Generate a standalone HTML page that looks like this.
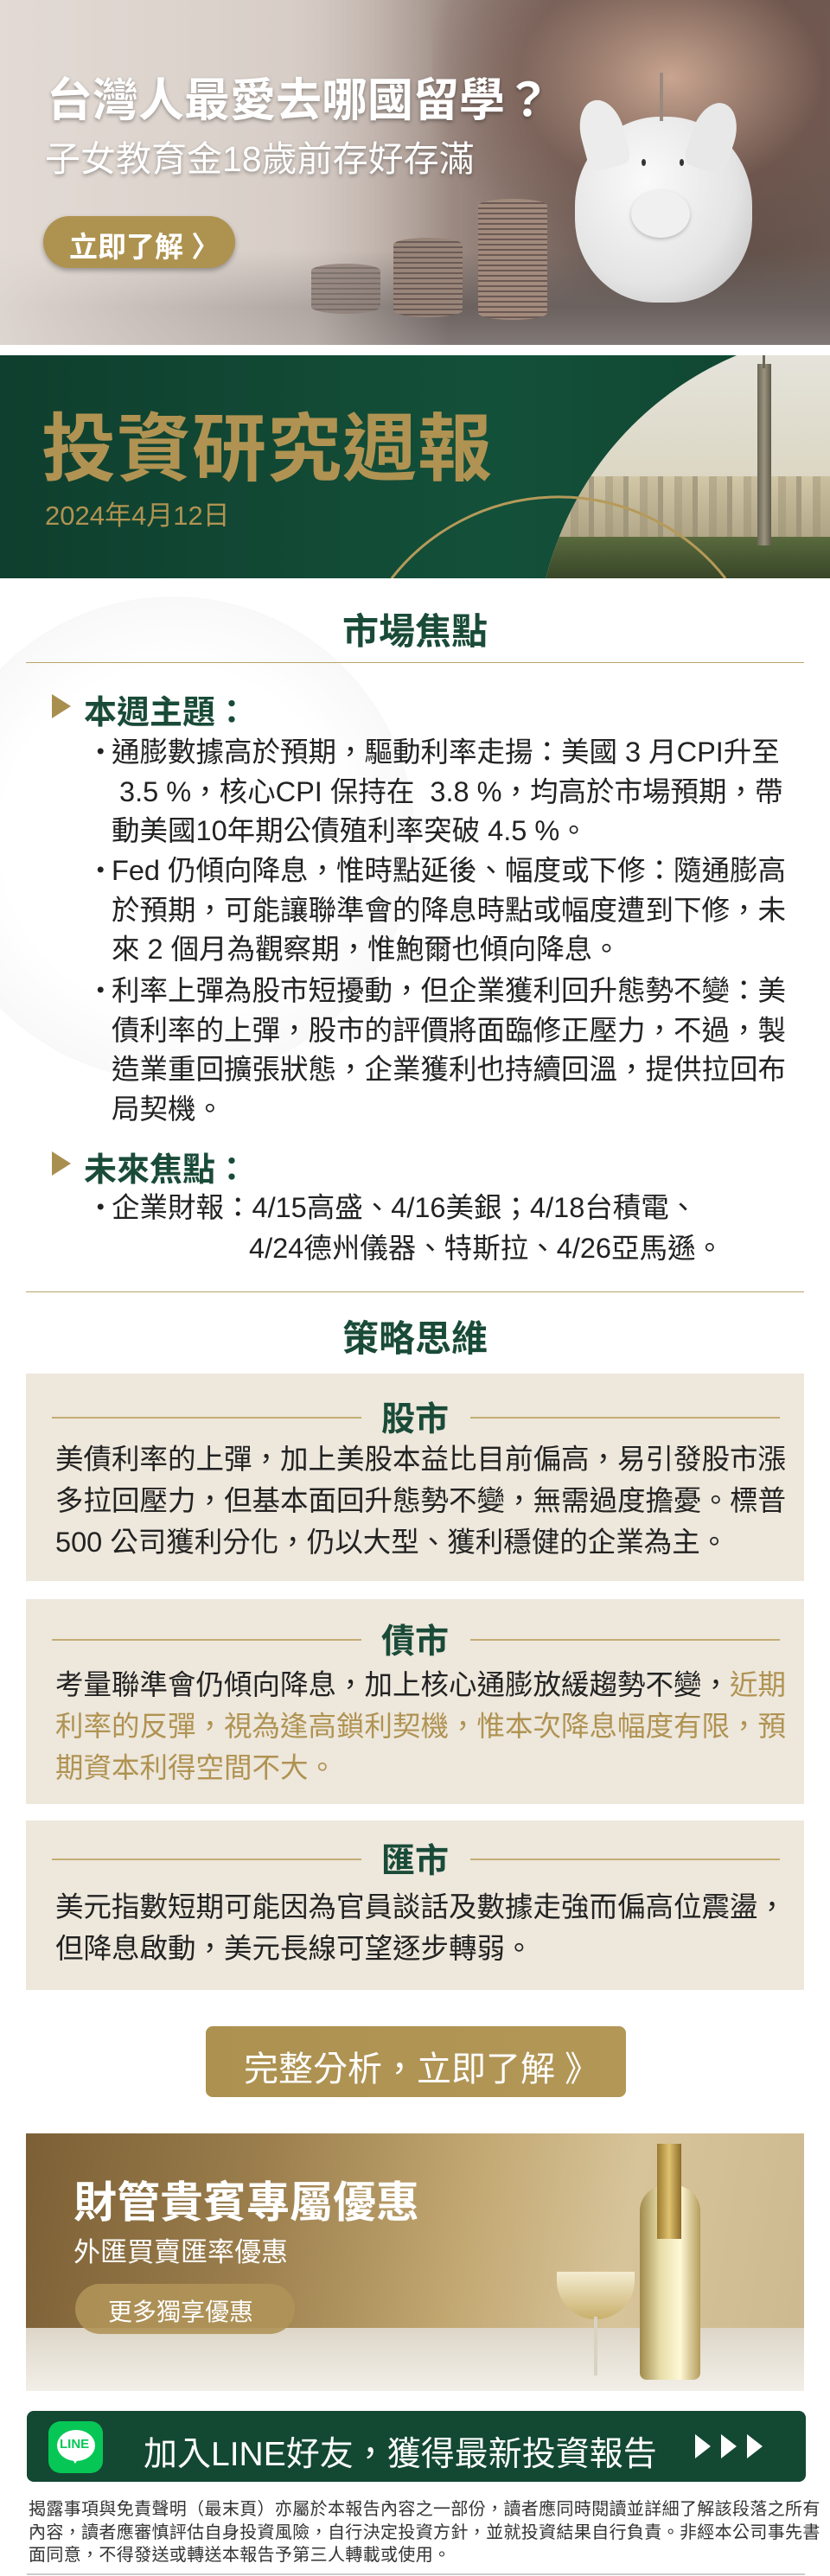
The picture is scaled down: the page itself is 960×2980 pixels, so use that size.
<!DOCTYPE html>
<html><head><meta charset="utf-8">
<style>
*{margin:0;padding:0;box-sizing:border-box}
body{width:960px;height:2980px;position:relative;background:#fff;font-family:"Liberation Sans","Noto Sans CJK TC",sans-serif;color:#222;overflow:hidden}
.abs{position:absolute}
.t{white-space:nowrap}
.sec{font-size:42px;font-weight:bold;color:#1a4b39;width:960px;text-align:center}
.hd{font-size:38px;font-weight:bold;color:#1a4b39}
.tri{width:0;height:0;border-top:14px solid transparent;border-bottom:14px solid transparent;border-left:22px solid #a98f4f}
.p{font-size:32.5px;line-height:45.5px;color:#222}
.box{left:30px;width:900px;background:#ede7dc}
.bh{font-size:39px;font-weight:bold;color:#1a4b39;text-align:center}
.bl{height:2px;background:#c4ad74;top:0}
.bt{font-size:32.5px;line-height:48px;color:#222;position:absolute;left:34px;white-space:nowrap}
</style></head><body>

<!-- Hero banner -->
<div class="abs" style="left:0;top:0;width:960px;height:399px;overflow:hidden;background:linear-gradient(90deg,#dcd2cb 0%,#cfc4bd 35%,#8d7a72 60%,#5a4a44 80%,#6a5850 100%)">
  <div class="abs" style="left:500px;top:0;width:460px;height:300px;background:radial-gradient(ellipse at 60% 30%,#c9a590 0%,rgba(120,90,80,.5) 45%,rgba(0,0,0,0) 75%)"></div>
  <div class="abs" style="left:0;top:290px;width:960px;height:109px;background:linear-gradient(180deg,rgba(90,80,78,0),#6b625f 60%,#807875)"></div>
  <div class="abs" style="left:0;top:0;width:520px;height:399px;background:linear-gradient(90deg,rgba(226,218,212,.95),rgba(220,210,204,.6) 70%,rgba(220,210,204,0))"></div>
  <div class="abs" style="left:360px;top:305px;width:80px;height:58px;background:repeating-linear-gradient(180deg,#8e7f78 0 4px,#6e625d 4px 6px);border-radius:40px/8px;opacity:.8"></div>
  <div class="abs" style="left:455px;top:275px;width:80px;height:92px;background:repeating-linear-gradient(180deg,#9a857a 0 4px,#6b5b55 4px 6px);border-radius:40px/8px"></div>
  <div class="abs" style="left:553px;top:230px;width:80px;height:140px;background:repeating-linear-gradient(180deg,#a28a7d 0 4px,#6b5953 4px 6px);border-radius:40px/8px"></div>
  <div class="abs" style="left:665px;top:135px;width:205px;height:215px;border-radius:48% 48% 45% 45%;background:radial-gradient(ellipse at 40% 35%,#fafafa,#e4e4e4 60%,#b9b9b9)"></div>
  <div class="abs" style="left:672px;top:115px;width:50px;height:80px;border-radius:50% 50% 20% 20%;background:#ececec;transform:rotate(-15deg)"></div>
  <div class="abs" style="left:800px;top:118px;width:50px;height:80px;border-radius:50% 50% 20% 20%;background:#e8e8e8;transform:rotate(18deg)"></div>
  <div class="abs" style="left:730px;top:220px;width:68px;height:55px;border-radius:50%;background:#f0f0f0;box-shadow:0 2px 4px #bbb"></div>
  <div class="abs" style="left:742px;top:184px;width:5px;height:8px;border-radius:50%;background:#333"></div>
  <div class="abs" style="left:786px;top:184px;width:5px;height:8px;border-radius:50%;background:#333"></div>
  <div class="abs" style="left:763px;top:84px;width:4px;height:56px;background:#9a8a80"></div>
  <div class="abs t" style="left:54px;top:74px;font-size:53px;font-weight:bold;color:#fff;text-shadow:0 2px 4px rgba(0,0,0,.35)">台灣人最愛去哪國留學？</div>
  <div class="abs t" style="left:52px;top:150px;font-size:41px;color:#fff;text-shadow:0 2px 4px rgba(0,0,0,.35)">子女教育金18歲前存好存滿</div>
  <div class="abs" style="left:50px;top:250px;width:222px;height:60px;border-radius:30px;background:#ae9350;box-shadow:0 3px 6px rgba(0,0,0,.3)"></div>
  <div class="abs t" style="left:80px;top:259px;font-size:33px;font-weight:bold;color:#fff">立即了解 〉</div>
</div>

<!-- Green banner -->
<div class="abs" style="left:0;top:411px;width:960px;height:258px;overflow:hidden;background:linear-gradient(90deg,#0f3f2e,#13503a 60%,#0f4430)">
  <div class="abs" style="left:620px;top:-30px;width:760px;height:760px;border-radius:50%;overflow:hidden;background:linear-gradient(180deg,#e7e6df 0%,#d8d2bb 30%,#e6d9a8 50%,#b8ab8e 70%,#6e6a55 90%)">
    <div class="abs" style="left:0;top:170px;width:340px;height:120px;background:linear-gradient(180deg,rgba(200,190,160,.3),rgba(150,140,110,.9)),repeating-linear-gradient(90deg,#b0a486 0 9px,#cbbf9d 9px 21px,#9a9078 21px 27px,#d6cbaa 27px 40px)"></div>
    <div class="abs" style="left:0;top:240px;width:340px;height:60px;background:linear-gradient(180deg,#5a6a3e,#2f3d22)"></div>
  </div>
  <div class="abs" style="left:876px;top:10px;width:16px;height:210px;background:linear-gradient(90deg,#6a6658,#9a937c,#5e5a4c)"></div>
  <div class="abs" style="left:882px;top:-5px;width:3px;height:20px;background:#6a6658"></div>
  <svg class="abs" style="left:0;top:0" width="960" height="258"><path d="M453 258 A245 245 0 0 1 839 258" fill="none" stroke="#b59a5a" stroke-width="3"/></svg>
  <div class="abs t" style="left:48px;top:38px;font-size:86px;font-weight:bold;color:#b09352;letter-spacing:1px">投資研究週報</div>
  <div class="abs t" style="left:52px;top:160px;font-size:31px;color:#b09352">2024年4月12日</div>
</div>

<!-- Market focus -->
<div class="abs" style="left:-80px;top:690px;width:560px;height:560px;border-radius:50%;background:radial-gradient(circle,rgba(240,240,240,0) 50%,rgba(235,235,235,.35) 72%,rgba(255,255,255,0) 74%)"></div>
<div class="abs sec t" style="left:0;top:697px">市場焦點</div>
<div class="abs" style="left:30px;top:766px;width:900px;height:1px;background:#b9a46c"></div>

<div class="abs tri" style="left:60px;top:803px"></div>
<div class="abs hd t" style="left:97px;top:793px">本週主題：</div>
<div class="abs p t" style="left:100px;top:848px">・</div>
<div class="abs p t" style="left:129px;top:848px">通膨數據高於預期，驅動利率走揚：美國 3 月CPI升至<br>&nbsp;3.5 %，核心CPI 保持在&nbsp; 3.8 %，均高於市場預期，帶<br>動美國10年期公債殖利率突破 4.5 %。</div>
<div class="abs p t" style="left:100px;top:985px">・</div>
<div class="abs p t" style="left:129px;top:985px">Fed 仍傾向降息，惟時點延後、幅度或下修：隨通膨高<br>於預期，可能讓聯準會的降息時點或幅度遭到下修，未<br>來 2 個月為觀察期，惟鮑爾也傾向降息。</div>
<div class="abs p t" style="left:100px;top:1124px">・</div>
<div class="abs p t" style="left:129px;top:1124px">利率上彈為股市短擾動，但企業獲利回升態勢不變：美<br>債利率的上彈，股市的評價將面臨修正壓力，不過，製<br>造業重回擴張狀態，企業獲利也持續回溫，提供拉回布<br>局契機。</div>

<div class="abs tri" style="left:60px;top:1332px"></div>
<div class="abs hd t" style="left:97px;top:1322px">未來焦點：</div>
<div class="abs p t" style="left:100px;top:1375px">・</div>
<div class="abs p t" style="left:129px;top:1375px">企業財報：4/15高盛、4/16美銀；4/18台積電、</div>
<div class="abs p t" style="left:288px;top:1422px">4/24德州儀器、特斯拉、4/26亞馬遜。</div>
<div class="abs" style="left:30px;top:1494px;width:900px;height:1px;background:#b9a46c"></div>

<!-- Strategy -->
<div class="abs sec t" style="left:0;top:1515px">策略思維</div>

<div class="abs box" style="top:1589px;height:240px">
  <div class="abs bl" style="left:30px;width:358px;top:50px"></div>
  <div class="abs bl" style="left:514px;width:358px;top:50px"></div>
  <div class="abs bh t" style="left:0;width:900px;top:22px">股市</div>
  <div class="bt" style="top:75px">美債利率的上彈，加上美股本益比目前偏高，易引發股市漲<br>多拉回壓力，但基本面回升態勢不變，無需過度擔憂。標普<br>500 公司獲利分化，仍以大型、獲利穩健的企業為主。</div>
</div>

<div class="abs box" style="top:1850px;height:237px">
  <div class="abs bl" style="left:30px;width:358px;top:46px"></div>
  <div class="abs bl" style="left:514px;width:358px;top:46px"></div>
  <div class="abs bh t" style="left:0;width:900px;top:18px">債市</div>
  <div class="bt" style="top:75px">考量聯準會仍傾向降息，加上核心通膨放緩趨勢不變，<span style="color:#b09352">近期<br>利率的反彈，視為逢高鎖利契機，惟本次降息幅度有限，預<br>期資本利得空間不大。</span></div>
</div>

<div class="abs box" style="top:2106px;height:196px">
  <div class="abs bl" style="left:30px;width:358px;top:44px"></div>
  <div class="abs bl" style="left:514px;width:358px;top:44px"></div>
  <div class="abs bh t" style="left:0;width:900px;top:16px">匯市</div>
  <div class="bt" style="top:76px">美元指數短期可能因為官員談話及數據走強而偏高位震盪，<br>但降息啟動，美元長線可望逐步轉弱。</div>
</div>

<!-- CTA -->
<div class="abs" style="left:238px;top:2344px;width:486px;height:82px;border-radius:8px;background:linear-gradient(90deg,#ad9150,#b39757)"></div>
<div class="abs t" style="left:282px;top:2361px;font-size:40px;color:#fff">完整分析，立即了解 》</div>

<!-- Promo -->
<div class="abs" style="left:30px;top:2468px;width:900px;height:298px;overflow:hidden;background:linear-gradient(100deg,#7c5f35 0%,#9c7f4d 30%,#c2a771 55%,#d7c49a 75%,#cdb98f 100%)">
  <div class="abs" style="left:0;top:225px;width:900px;height:73px;background:linear-gradient(180deg,#ddd6c8,#f2efe8)"></div>
  <div class="abs" style="left:710px;top:60px;width:70px;height:225px;border-radius:30px 30px 8px 8px;background:linear-gradient(90deg,#a08a4c,#e6dca8,#fff8d6,#b59c5c)"></div>
  <div class="abs" style="left:730px;top:12px;width:28px;height:110px;background:linear-gradient(90deg,#9a7a30,#e0c270,#8c6c28)"></div>
  <div class="abs" style="left:614px;top:160px;width:90px;height:55px;border-radius:0 0 45px 45px;background:linear-gradient(180deg,#f4ecd0,#c9b06c)"></div>
  <div class="abs" style="left:657px;top:212px;width:4px;height:68px;background:#d8d2c0"></div>
  <div class="abs t" style="left:55px;top:40px;font-size:50px;color:#fff;font-weight:bold">財管貴賓專屬優惠</div>
  <div class="abs t" style="left:55px;top:112px;font-size:31px;color:#fff">外匯買賣匯率優惠</div>
  <div class="abs" style="left:57px;top:174px;width:254px;height:58px;border-radius:29px;background:rgba(176,148,88,.9)"></div>
  <div class="abs t" style="left:95px;top:185px;font-size:28px;color:#fff">更多獨享優惠</div>
</div>

<!-- LINE bar -->
<div class="abs" style="left:31px;top:2789px;width:901px;height:82px;border-radius:8px;background:#134833"></div>
<div class="abs" style="left:56px;top:2801px;width:63px;height:60px;border-radius:14px;background:#06c755"></div>
<div class="abs" style="left:66px;top:2811px;width:44px;height:36px;border-radius:50%;background:#fff"></div>
<div class="abs" style="left:82px;top:2842px;width:0;height:0;border-left:5px solid transparent;border-right:5px solid transparent;border-top:8px solid #fff"></div>
<div class="abs t" style="left:69px;top:2819px;font-size:15px;font-weight:bold;color:#06c755">LINE</div>
<div class="abs t" style="left:166px;top:2808px;font-size:39px;color:#fff">加入LINE好友，獲得最新投資報告</div>
<svg class="abs" style="left:800px;top:2812px" width="90" height="36"><path d="M4 4 L22 18 L4 32Z M34 4 L52 18 L34 32Z M64 4 L82 18 L64 32Z" fill="#fff"/></svg>

<!-- Disclaimer -->
<div class="abs t" style="left:33px;top:2890px;font-size:20px;letter-spacing:0.35px;line-height:26.5px;color:#333">揭露事項與免責聲明（最末頁）亦屬於本報告內容之一部份，讀者應同時閱讀並詳細了解該段落之所有<br>內容，讀者應審慎評估自身投資風險，自行決定投資方針，並就投資結果自行負責。非經本公司事先書<br>面同意，不得發送或轉送本報告予第三人轉載或使用。</div>
<div class="abs" style="left:31px;top:2977px;width:900px;height:2px;background:#ccc"></div>
</body></html>
